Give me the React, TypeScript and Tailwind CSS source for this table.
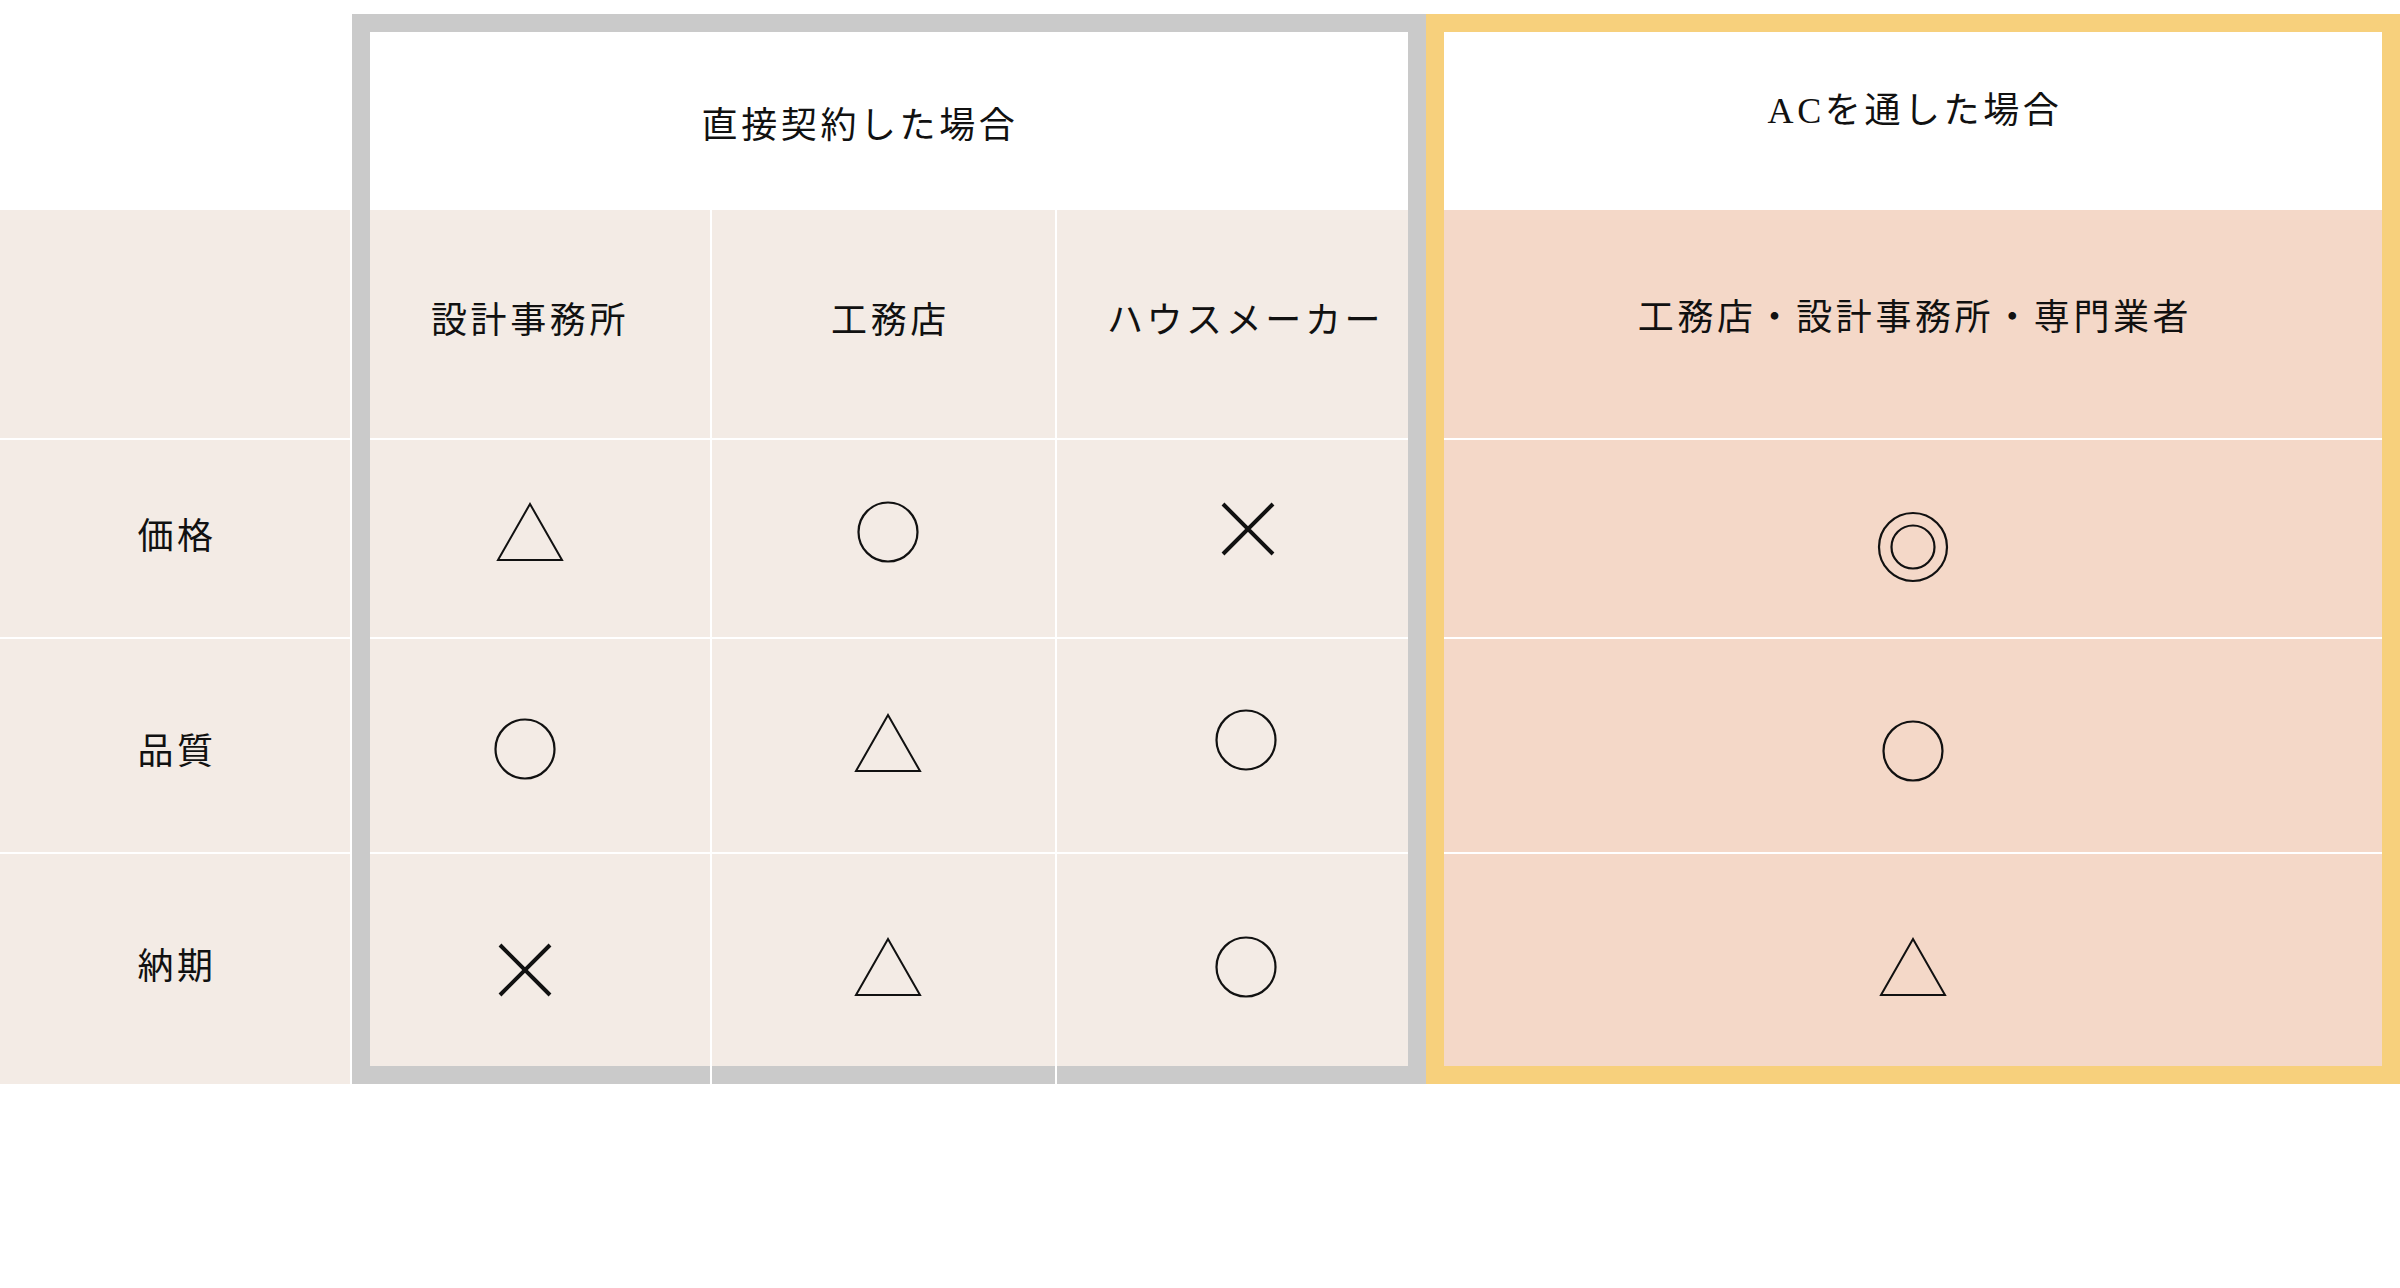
import type { ReactNode } from 'react'

type Mark = 'circle' | 'double' | 'triangle' | 'cross'

function Symbol({ kind }: { kind: Mark }) {
  if (kind === 'circle') {
    return (
      <svg width="62" height="62" viewBox="0 0 62 62">
        <circle cx="31" cy="31" r="29.5" fill="none" stroke="#111" strokeWidth="2.2" />
      </svg>
    )
  }
  if (kind === 'double') {
    return (
      <svg width="72" height="72" viewBox="0 0 72 72">
        <circle cx="36" cy="36" r="34" fill="none" stroke="#111" strokeWidth="2.2" />
        <circle cx="36" cy="36" r="21.5" fill="none" stroke="#111" strokeWidth="2.2" />
      </svg>
    )
  }
  if (kind === 'triangle') {
    return (
      <svg width="68" height="60" viewBox="0 0 68 60">
        <path d="M34 2 L66 58 L2 58 Z" fill="none" stroke="#111" strokeWidth="2" strokeLinejoin="miter" />
      </svg>
    )
  }
  return (
    <svg width="56" height="56" viewBox="0 0 56 56">
      <path d="M3 3 L53 53 M53 3 L3 53" fill="none" stroke="#111" strokeWidth="4" />
    </svg>
  )
}

const font = "font-['Liberation_Serif','Noto_Sans_CJK_JP',serif] text-[36px] tracking-[0.1em] text-[#111] leading-none"

// row heights of the body rows (inside the frames)
const rowH = ['h-[228px]', 'h-[197px]', 'h-[213px]', 'h-[212px]']

function Cell({ w, bg, children, cls = '' }: { w: string; bg: string; children?: ReactNode; cls?: string }) {
  return <div className={`${w} ${bg} flex items-center justify-center ${cls}`}>{children}</div>
}

export default function App() {
  const beige = 'bg-[#f3ebe5]'
  const pink = 'bg-[#f4d8c8]'

  return (
    <div className={`w-[2400px] h-[1288px] bg-white flex items-start ${font}`}>
      {/* label column */}
      <div className="w-[350px] flex flex-col pt-[210px] gap-[2px]">
        <div className={`h-[228px] ${beige}`} />
        <div className={`h-[197px] ${beige} flex items-center justify-center pl-[4px] pt-[-2px]`}>
          <span className="mt-[-4px]">価格</span>
        </div>
        <div className={`h-[213px] ${beige} flex items-center justify-center pl-[4px]`}>
          <span className="mt-[12px]">品質</span>
        </div>
        <div className={`h-[230px] ${beige} flex items-center justify-center pl-[4px]`}>
          <span className="mt-[-4px]">納期</span>
        </div>
      </div>

      {/* direct contract frame */}
      <div className="ml-[2px] mt-[14px] w-[1074px] h-[1070px] bg-[#cacaca] pt-[18px] px-[18px] flex flex-col">
        <div className="h-[178px] bg-white flex items-center justify-center pr-[58px] pt-[10px]">直接契約した場合</div>
        <div className="flex flex-col gap-[2px] bg-white">
          <div className={`${rowH[0]} flex gap-[2px]`}>
            <Cell w="w-[340px]" bg={beige} cls="pr-[20px] pb-[6px]">設計事務所</Cell>
            <Cell w="w-[343px]" bg={beige} cls="pl-[14px] pb-[6px]">工務店</Cell>
            <Cell w="w-[351px]" bg={beige} cls="pl-[26px] pb-[6px]">ハウスメーカー</Cell>
          </div>
          <div className={`${rowH[1]} flex gap-[2px]`}>
            <Cell w="w-[340px]" bg={beige} cls="pr-[20px] pb-[14px]"><Symbol kind="triangle" /></Cell>
            <Cell w="w-[343px]" bg={beige} cls="pl-[9px] pb-[14px]"><Symbol kind="circle" /></Cell>
            <Cell w="w-[351px]" bg={beige} cls="pl-[30px] pb-[20px]"><Symbol kind="cross" /></Cell>
          </div>
          <div className={`${rowH[2]} flex gap-[2px]`}>
            <Cell w="w-[340px]" bg={beige} cls="pr-[30px] pt-[6px]"><Symbol kind="circle" /></Cell>
            <Cell w="w-[343px]" bg={beige} cls="pl-[9px] pb-[6px]"><Symbol kind="triangle" /></Cell>
            <Cell w="w-[351px]" bg={beige} cls="pl-[27px] pb-[12px]"><Symbol kind="circle" /></Cell>
          </div>
          <div className={`${rowH[3]} flex gap-[2px]`}>
            <Cell w="w-[340px]" bg={beige} cls="pr-[30px] pt-[20px]"><Symbol kind="cross" /></Cell>
            <Cell w="w-[343px]" bg={beige} cls="pl-[9px] pt-[14px]"><Symbol kind="triangle" /></Cell>
            <Cell w="w-[351px]" bg={beige} cls="pl-[27px] pt-[14px]"><Symbol kind="circle" /></Cell>
          </div>
        </div>
        <div className="h-[18px] flex gap-[2px] bg-white">
          <div className="w-[340px] bg-[#cacaca]" />
          <div className="w-[343px] bg-[#cacaca]" />
          <div className="w-[351px] bg-[#cacaca]" />
        </div>
      </div>

      {/* through AC frame */}
      <div className="mt-[14px] w-[974px] h-[1070px] bg-[#f7d07c] p-[18px] flex flex-col">
        <div className="h-[178px] bg-white flex items-center justify-center pb-[20px] pl-[4px]">ACを通した場合</div>
        <div className="flex flex-col gap-[2px] bg-white">
          <div className={`${rowH[0]} ${pink} flex items-center justify-center pb-[12px] pl-[4px]`}>工務店・設計事務所・専門業者</div>
          <div className={`${rowH[1]} ${pink} flex items-center justify-center pt-[16px]`}><Symbol kind="double" /></div>
          <div className={`${rowH[2]} ${pink} flex items-center justify-center pt-[10px]`}><Symbol kind="circle" /></div>
          <div className={`${rowH[3]} ${pink} flex items-center justify-center pt-[14px]`}><Symbol kind="triangle" /></div>
        </div>
      </div>
    </div>
  )
}
